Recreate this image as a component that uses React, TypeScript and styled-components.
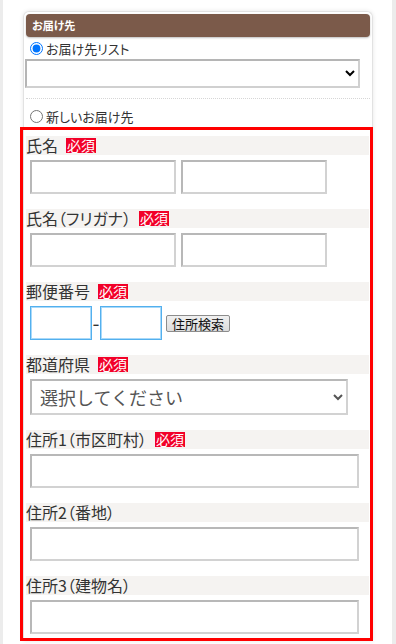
import React from 'react'
import styled, { createGlobalStyle } from 'styled-components'

const GlobalStyle = createGlobalStyle`
  html, body {
    margin: 0;
    padding: 0;
    overflow: hidden;
    background: #fff;
  }
  body {
    font-family: "Noto Sans CJK JP", "Noto Sans", sans-serif;
    font-feature-settings: "palt";
    color: #333;
  }
`

const Page = styled.div`
  box-sizing: border-box;
  width: 396px;
  min-height: 100vh;
  border-left: 3px solid #ececec;
  border-right: 4px solid #ececec;
  padding: 11px 19px 0 20px;
`

const Card = styled.div`
  border: 1px solid #e2e2e2;
  border-bottom: none;
  border-radius: 6px 6px 0 0;
  padding: 2px 2px 0;
  box-shadow: 0 0 4px rgba(0, 0, 0, 0.1);
`

const CardHeader = styled.div`
  height: 23px;
  line-height: 23px;
  padding-left: 6px;
  background: #7b5a4a;
  border-radius: 4px;
  box-shadow: 0 1px 2px rgba(0, 0, 0, 0.25);
  color: #fff;
  font-size: 11px;
  font-weight: bold;
`

const RadioRow = styled.label<{ $top?: number }>`
  display: flex;
  align-items: center;
  height: 22px;
  margin-top: ${({ $top }) => $top ?? 0}px;
  font-size: 13px;
  color: #333;
`

const Radio = styled.input.attrs({ type: 'radio' })`
  width: 13px;
  height: 13px;
  margin: 0 3px 0 4px;
`

const ListSelect = styled.select`
  display: block;
  box-sizing: border-box;
  width: 335px;
  height: 29px;
  margin-left: -1px;
  border: 2px solid;
  border-color: #b5b5b5 #d0d0d0 #d0d0d0 #b5b5b5;
  background: #fff;
  border-radius: 0;
`

const Divider = styled.div`
  margin-top: 10px;
  border-top: 1px dotted #d6d6d6;
`

const Highlight = styled.div`
  border: 3px solid #ff0000;
  margin: 0 -3px 0 -6px;
  padding: 6px 1px 4px 3px;
`

const Field = styled.div`
  margin-bottom: 15px;
  &:last-child {
    margin-bottom: 0;
  }
`

const FieldLabel = styled.div`
  display: flex;
  align-items: center;
  height: 19px;
  line-height: 19px;
  background: #f5f3f1;
  font-size: 16px;
  color: #333;
`

const Required = styled.span`
  margin-left: 8px;
  padding: 0 1px;
  background: #f20028;
  color: #fff;
  font-size: 14px;
  line-height: 15px;
`

const Controls = styled.div<{ $gap?: number }>`
  display: flex;
  align-items: center;
  gap: ${({ $gap }) => $gap ?? 5}px;
  margin-top: 5px;
  padding-left: 4px;
`

const TextInput = styled.input<{ $w: number }>`
  box-sizing: border-box;
  width: ${({ $w }) => $w}px;
  height: 34px;
  margin: 0;
  border: 2px solid;
  border-color: #b8b8b8 #d2d2d2 #d2d2d2 #b8b8b8;
  background: #fff;
  border-radius: 0;
`

const PostalInput = styled.input`
  box-sizing: border-box;
  width: 62px;
  height: 34px;
  margin: 0;
  border: 1px solid #53b0ee;
  box-shadow: inset 0 0 0 1px #a9d9f9;
  background: #fff;
  border-radius: 0;
`

const Dash = styled.span`
  width: 8px;
  text-align: center;
  font-size: 20px;
  line-height: 20px;
  color: #333;
`

const SearchButton = styled.button`
  margin-left: 4px;
  padding: 1px 5px;
  border: 1px solid #8c8c8c;
  border-radius: 2px;
  background: linear-gradient(#f0f0f0, #dcdcdc);
  font-family: inherit;
  font-size: 13px;
  line-height: 13px;
  color: #111;
`

const PrefSelect = styled.select`
  box-sizing: border-box;
  width: 318px;
  height: 36px;
  padding-left: 4px;
  border: 2px solid;
  border-color: #b8b8b8 #d2d2d2 #d2d2d2 #b8b8b8;
  background: #fff;
  border-radius: 0;
  font-family: inherit;
  font-size: 18px;
  color: #555;
`

const App = () => {
  return (
    <>
      <GlobalStyle />
      <Page>
        <Card>
          <CardHeader>お届け先</CardHeader>
          <RadioRow>
            <Radio name="dest" defaultChecked />
            お届け先リスト
          </RadioRow>
          <ListSelect>
            <option value="" />
          </ListSelect>
          <Divider />
          <RadioRow $top={6}>
            <Radio name="dest" />
            新しいお届け先
          </RadioRow>
          <Highlight>
            <Field>
              <FieldLabel>
                氏名<Required>必須</Required>
              </FieldLabel>
              <Controls>
                <TextInput $w={146} />
                <TextInput $w={146} />
              </Controls>
            </Field>
            <Field>
              <FieldLabel>
                氏名（フリガナ）<Required>必須</Required>
              </FieldLabel>
              <Controls>
                <TextInput $w={146} />
                <TextInput $w={146} />
              </Controls>
            </Field>
            <Field>
              <FieldLabel>
                郵便番号<Required>必須</Required>
              </FieldLabel>
              <Controls $gap={0}>
                <PostalInput />
                <Dash>-</Dash>
                <PostalInput />
                <SearchButton type="button">住所検索</SearchButton>
              </Controls>
            </Field>
            <Field>
              <FieldLabel>
                都道府県<Required>必須</Required>
              </FieldLabel>
              <Controls>
                <PrefSelect defaultValue="">
                  <option value="">選択してください</option>
                </PrefSelect>
              </Controls>
            </Field>
            <Field>
              <FieldLabel>
                住所1（市区町村）<Required>必須</Required>
              </FieldLabel>
              <Controls>
                <TextInput $w={329} />
              </Controls>
            </Field>
            <Field>
              <FieldLabel>住所2（番地）</FieldLabel>
              <Controls>
                <TextInput $w={329} />
              </Controls>
            </Field>
            <Field>
              <FieldLabel>住所3（建物名）</FieldLabel>
              <Controls>
                <TextInput $w={329} />
              </Controls>
            </Field>
          </Highlight>
        </Card>
      </Page>
    </>
  )
}

export default App
